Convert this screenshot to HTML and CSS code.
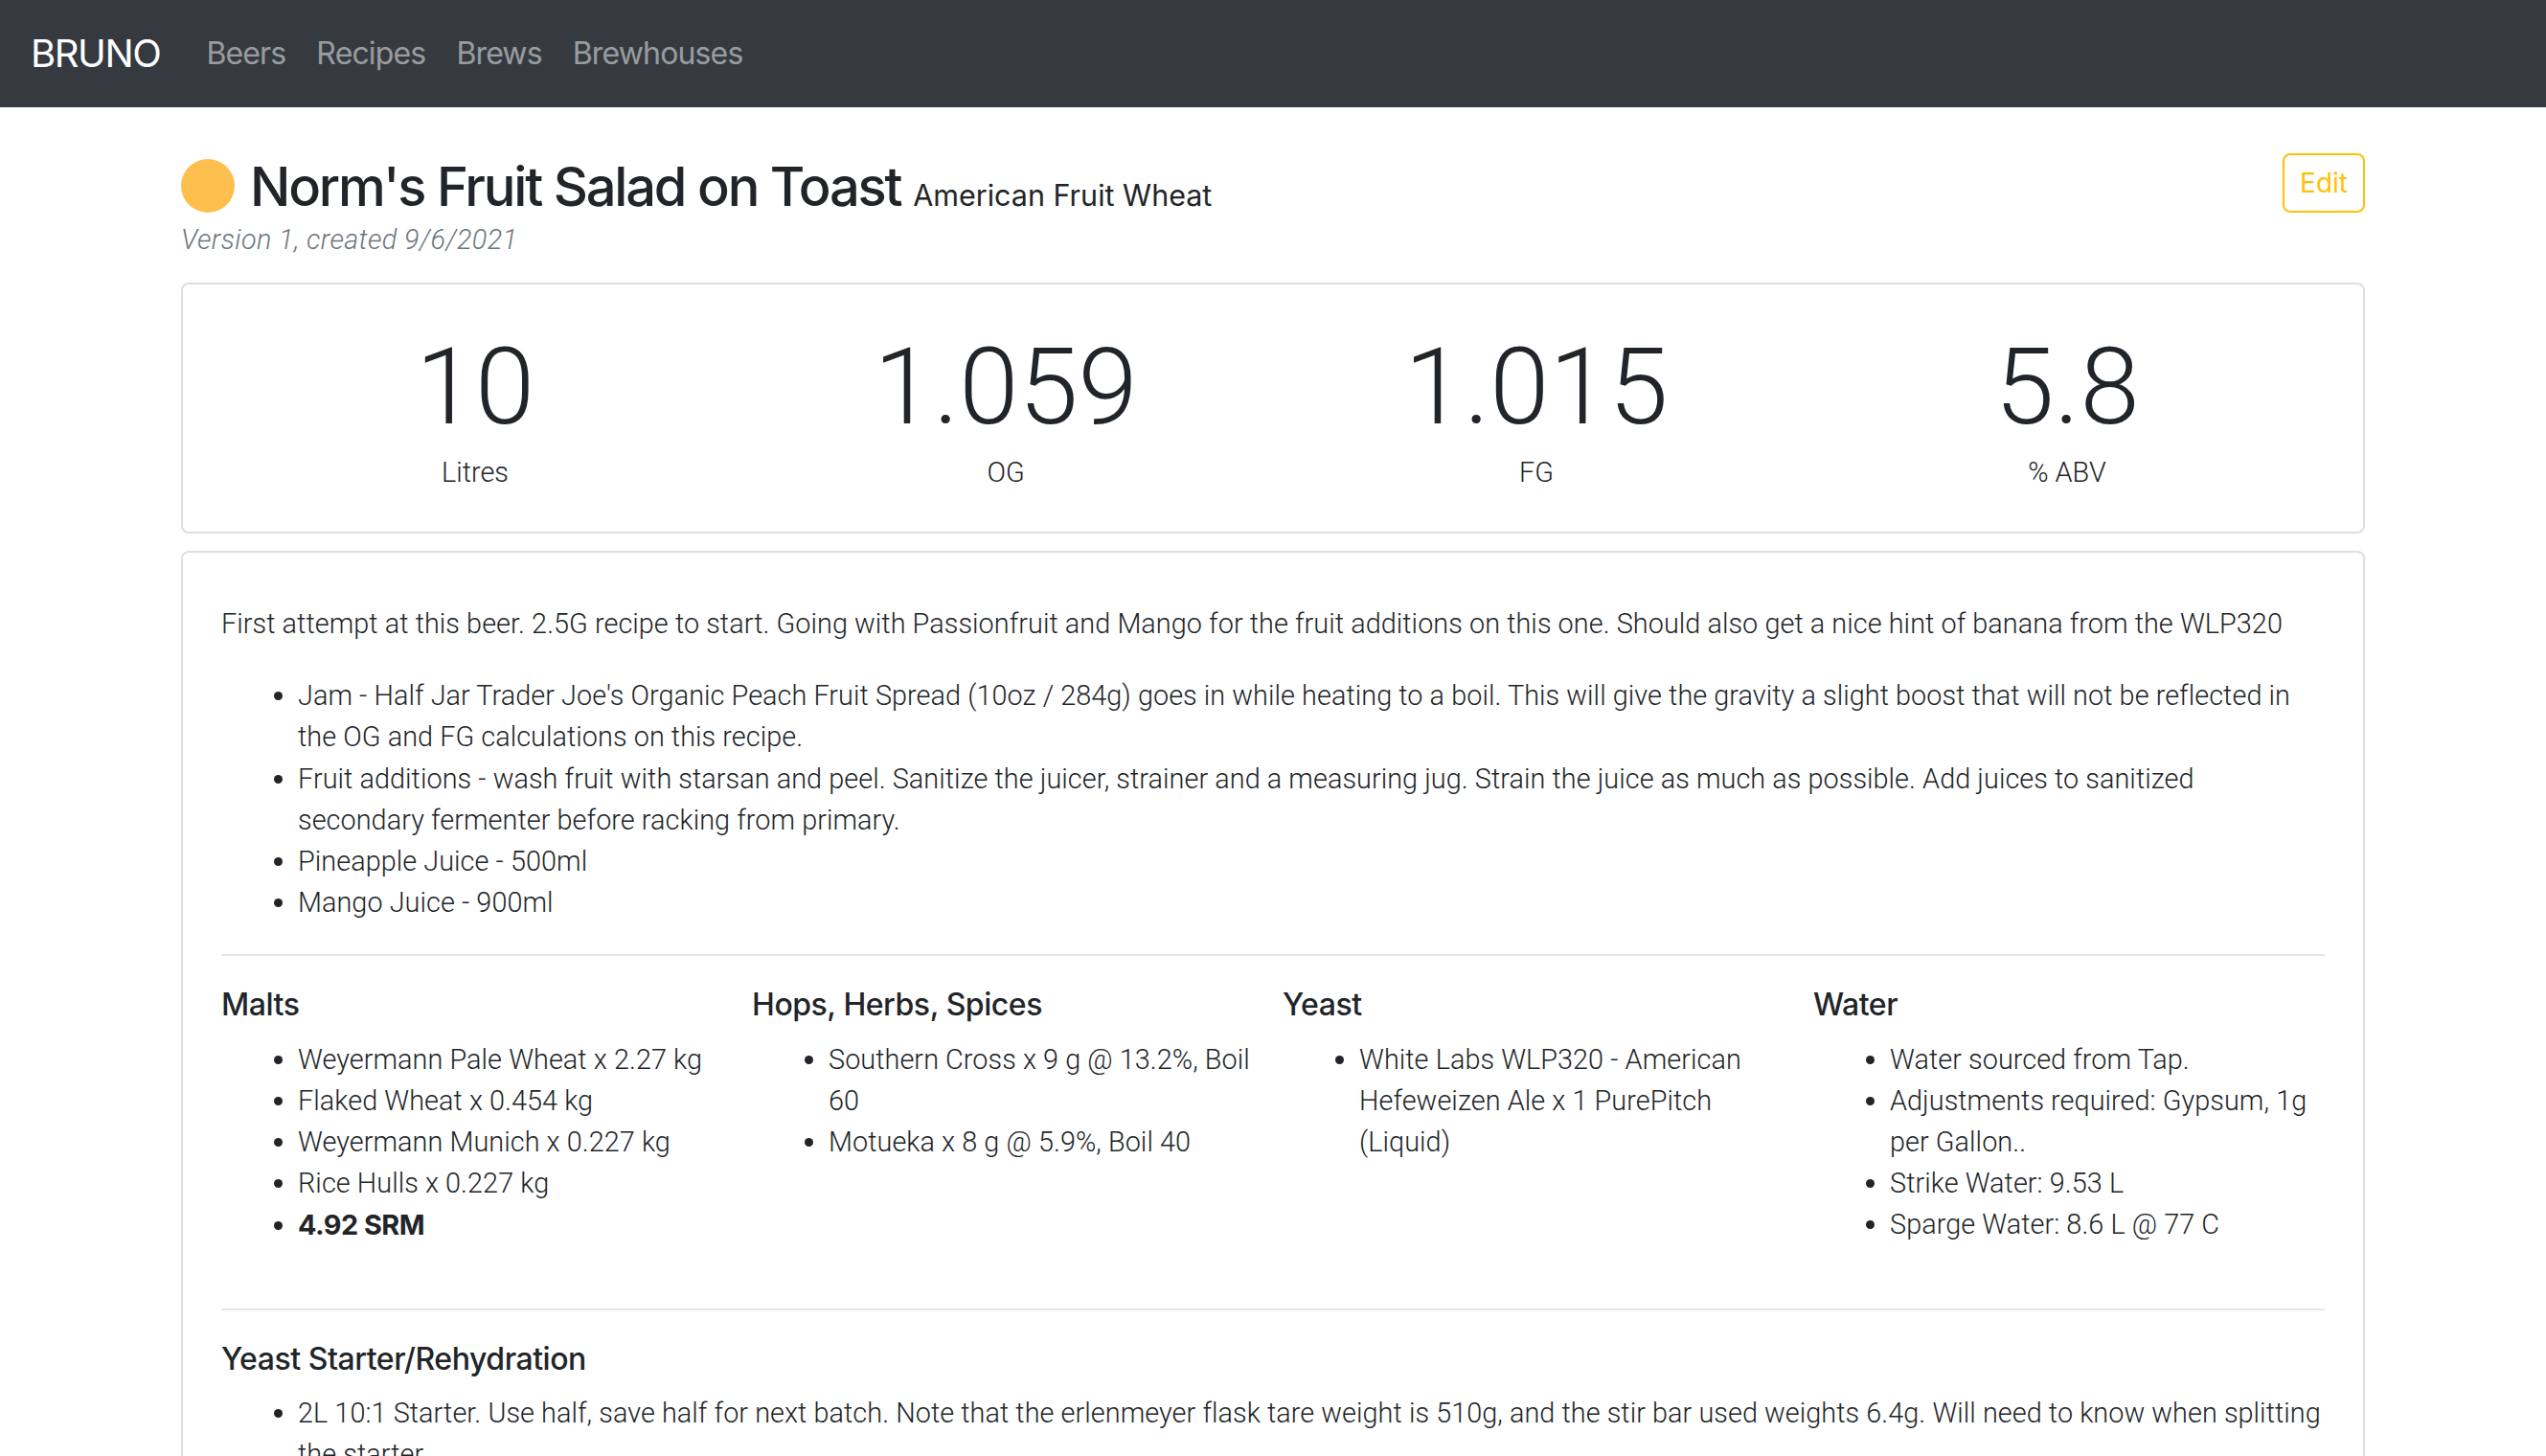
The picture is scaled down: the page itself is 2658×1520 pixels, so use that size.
FILE: index.html
```html
<!DOCTYPE html>
<html lang="en">
<head>
<meta charset="utf-8">
<title>Norm's Fruit Salad on Toast - Bruno</title>
<link rel="stylesheet" href="styles.css">
</head>
<body>
<nav class="navbar">
  <a class="brand" href="#">BRUNO</a>
  <div class="nav">
    <a class="nav-link" href="#">Beers</a>
    <a class="nav-link" href="#">Recipes</a>
    <a class="nav-link" href="#">Brews</a>
    <a class="nav-link" href="#">Brewhouses</a>
  </div>
</nav>

<main class="page">
  <div class="recipe-head">
    <div class="title-col">
      <h1 class="title"><span class="dot"></span>Norm's Fruit Salad on Toast <small class="style-name">American Fruit Wheat</small></h1>
      <div class="version">Version 1, created 9/6/2021</div>
    </div>
    <button class="btn-edit">Edit</button>
  </div>

  <section class="card stats">
    <div class="stat">
      <div class="stat-value">10</div>
      <div class="stat-label">Litres</div>
    </div>
    <div class="stat">
      <div class="stat-value">1.059</div>
      <div class="stat-label">OG</div>
    </div>
    <div class="stat">
      <div class="stat-value">1.015</div>
      <div class="stat-label">FG</div>
    </div>
    <div class="stat">
      <div class="stat-value">5.8</div>
      <div class="stat-label">% ABV</div>
    </div>
  </section>

  <section class="card details">
    <p class="notes">First attempt at this beer. 2.5G recipe to start. Going with Passionfruit and Mango for the fruit additions on this one. Should also get a nice hint of banana from the WLP320</p>
    <ul class="list">
      <li>Jam - Half Jar Trader Joe's Organic Peach Fruit Spread (10oz / 284g) goes in while heating to a boil. This will give the gravity a slight boost that will not be reflected in the OG and FG calculations on this recipe.</li>
      <li>Fruit additions - wash fruit with starsan and peel. Sanitize the juicer, strainer and a measuring jug. Strain the juice as much as possible. Add juices to sanitized secondary fermenter before racking from primary.</li>
      <li>Pineapple Juice - 500ml</li>
      <li>Mango Juice - 900ml</li>
    </ul>
    <hr class="rule">
    <div class="ingredients">
      <div class="ing-col">
        <h2 class="section-title">Malts</h2>
        <ul class="list">
          <li>Weyermann Pale Wheat x 2.27 kg</li>
          <li>Flaked Wheat x 0.454 kg</li>
          <li>Weyermann Munich x 0.227 kg</li>
          <li>Rice Hulls x 0.227 kg</li>
          <li><strong class="srm">4.92 SRM</strong></li>
        </ul>
      </div>
      <div class="ing-col">
        <h2 class="section-title">Hops, Herbs, Spices</h2>
        <ul class="list">
          <li>Southern Cross x 9 g @ 13.2%, Boil 60</li>
          <li>Motueka x 8 g @ 5.9%, Boil 40</li>
        </ul>
      </div>
      <div class="ing-col">
        <h2 class="section-title">Yeast</h2>
        <ul class="list">
          <li>White Labs WLP320 - American Hefeweizen Ale x 1 PurePitch (Liquid)</li>
        </ul>
      </div>
      <div class="ing-col">
        <h2 class="section-title">Water</h2>
        <ul class="list">
          <li>Water sourced from Tap.</li>
          <li>Adjustments required: Gypsum, 1g per Gallon..</li>
          <li>Strike Water: 9.53 L</li>
          <li>Sparge Water: 8.6 L @ 77 C</li>
        </ul>
      </div>
    </div>
    <hr class="rule">
    <h2 class="section-title">Yeast Starter/Rehydration</h2>
    <ul class="list">
      <li>2L 10:1 Starter. Use half, save half for next batch. Note that the erlenmeyer flask tare weight is 510g, and the stir bar used weights 6.4g. Will need to know when splitting the starter.</li>
    </ul>
  </section>
</main>
</body>
</html>
```

FILE: styles.css
```css
* {
  box-sizing: border-box;
}

body {
  margin: 0;
  font-family: Roboto, Inter, "Noto Sans", "Liberation Sans", sans-serif;
  font-size: 28.8px;
  font-weight: 300;
  line-height: 1.5;
  letter-spacing: 0.06px;
  color: #212529;
  background: #ffffff;
}

.navbar {
  height: 112px;
  background: #343a40;
  display: flex;
  align-items: center;
  padding: 0 32px;
}

.brand {
  font-family: Inter, "Noto Sans", sans-serif;
  font-size: 40px;
  font-weight: 400;
  line-height: 1.5;
  letter-spacing: -1.4px;
  color: #ffffff;
  text-decoration: none;
  margin-right: 32px;
}

.nav {
  display: flex;
}

.nav-link {
  font-family: Inter, "Noto Sans", sans-serif;
  font-size: 32px;
  font-weight: 400;
  line-height: 1.5;
  letter-spacing: -0.85px;
  color: rgba(255, 255, 255, 0.5);
  text-decoration: none;
  padding: 0 16px;
}

.page {
  width: 2280px;
  margin: 0 auto;
  padding-top: 50px;
}

.recipe-head {
  display: flex;
  justify-content: space-between;
  align-items: flex-start;
}

.title {
  margin: 0;
  font-family: Inter, "Noto Sans", sans-serif;
  font-size: 56px;
  font-weight: 500;
  line-height: 1.2;
  letter-spacing: -2.2px;
}

.dot {
  display: inline-block;
  width: 56px;
  height: 56px;
  border-radius: 50%;
  background: #ffbf4f;
  vertical-align: -7px;
  margin-right: 16px;
}

.style-name {
  font-size: 30.5px;
  font-weight: 400;
  letter-spacing: 0;
}

.version {
  font-style: italic;
  color: #6c757d;
  letter-spacing: 0.4px;
}

.btn-edit {
  font-family: Inter, "Noto Sans", sans-serif;
  font-size: 28px;
  font-weight: 400;
  line-height: 1.5;
  color: #ffc107;
  background: transparent;
  border: 2px solid #ffc107;
  border-radius: 8px;
  padding: 8px 16px;
  margin-top: -2px;
}

.card {
  border: 2px solid rgba(0, 0, 0, 0.125);
  border-radius: 8px;
  background: #ffffff;
}

.stats {
  margin-top: 23px;
  padding: 40px 0 40px 28px;
  display: grid;
  grid-template-columns: repeat(4, 554px);
  text-align: center;
}

.stat-value {
  font-size: 112px;
  font-weight: 300;
  line-height: 1.2;
  letter-spacing: 0;
}

.stat-label {
  letter-spacing: 0;
}

.details {
  margin-top: 18px;
  padding: 53px 40px 40px;
}

.notes {
  margin: 0 0 32px;
}

.list {
  margin: 0 0 32px;
  padding-left: 80px;
}

.rule {
  margin: 32px 0;
  border: 0;
  border-top: 2px solid rgba(0, 0, 0, 0.1);
  height: 0;
}

.ingredients {
  display: grid;
  grid-template-columns: repeat(4, 554px);
}

.ing-col {
  padding-right: 24px;
}

.section-title {
  margin: 0 0 16px;
  font-family: Inter, "Noto Sans", sans-serif;
  font-size: 32px;
  font-weight: 500;
  line-height: 1.2;
  letter-spacing: -0.45px;
}

.srm {
  font-family: Inter, "Noto Sans", sans-serif;
  font-weight: 700;
  letter-spacing: -0.5px;
}
```
